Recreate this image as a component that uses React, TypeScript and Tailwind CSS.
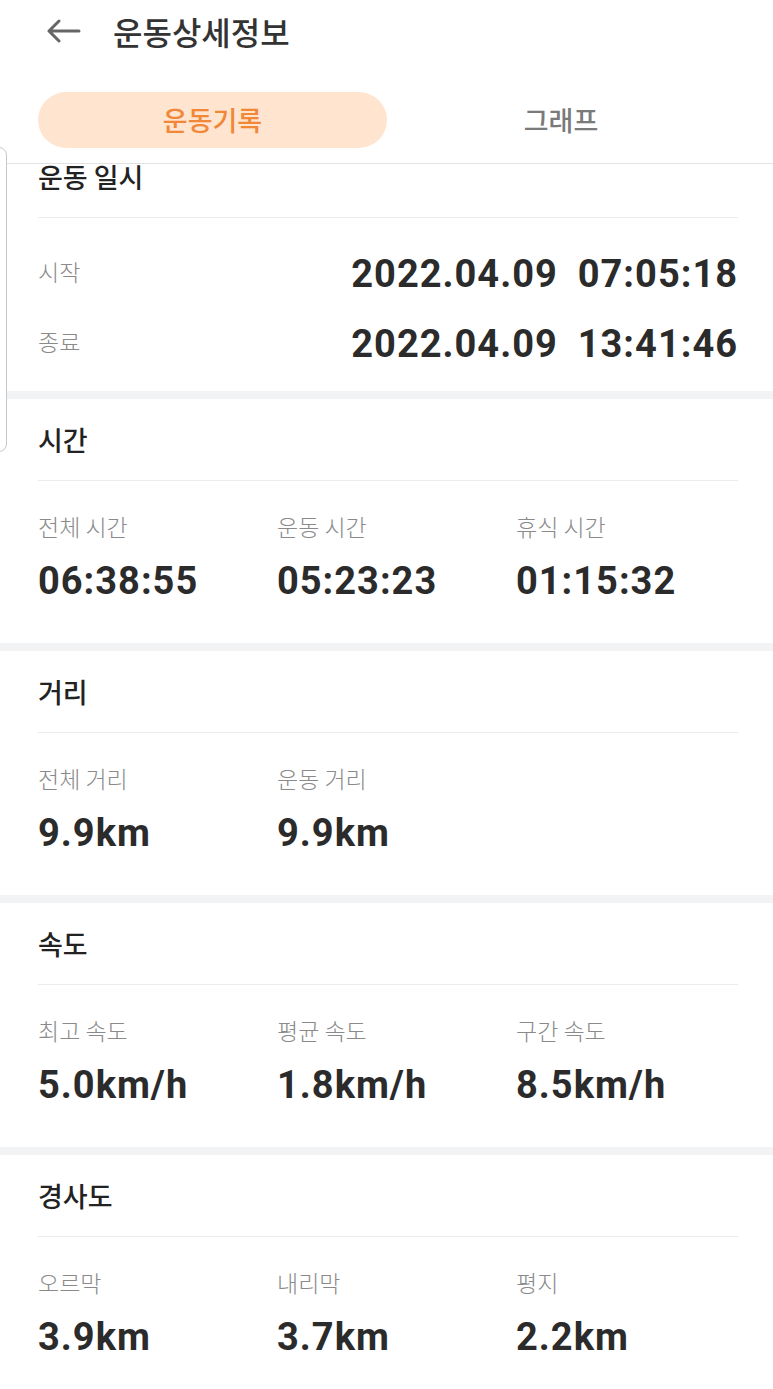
import React from "react";

const KR = { fontFamily: '"Noto Sans CJK KR", "Noto Sans", sans-serif' };
const NUM = { fontFamily: 'Roboto, "Noto Sans CJK KR", sans-serif' };

function Band() {
  return <div className="h-[8px] bg-[#f2f3f5]" />;
}

function Title({ children }: { children: React.ReactNode }) {
  return (
    <div className="h-[82px] flex items-center border-b border-[#ececec]">
      <span className="text-[27px] font-medium text-[#222] leading-none" style={KR}>
        {children}
      </span>
    </div>
  );
}

function StatSection({ title, items }: { title: string; items: [string, string][] }) {
  return (
    <div className="pl-[38px] pr-[35px] bg-white">
      <Title>{title}</Title>
      <div className="grid grid-cols-[239px_239px_1fr] pt-[30px] pb-[40px]">
        {items.map(([l, v]) => (
          <div key={l} className="flex flex-col">
            <div className="h-[30px] flex items-center text-[23px] text-[#8a8a8a] font-light" style={KR}>
              {l}
            </div>
            <div className="h-[44px] mt-[18px] flex items-center text-[38px] font-bold text-[#2b2b2b] tracking-[1px]" style={NUM}>
              {v}
            </div>
          </div>
        ))}
      </div>
    </div>
  );
}

export default function App() {
  return (
    <div className="relative w-[773px] h-[1389px] overflow-hidden bg-white">
      {/* header */}
      <div className="h-[62px] flex items-center">
        <svg className="ml-[46px]" width="35" height="24" viewBox="0 0 35 24" fill="none">
          <path d="M33 12H3M13 2L3 12l10 10" stroke="#666" strokeWidth="3" strokeLinecap="round" strokeLinejoin="round" />
        </svg>
        <span className="ml-[32px] text-[32px] font-medium text-[#333]" style={KR}>
          운동상세정보
        </span>
      </div>
      {/* tabs */}
      <div className="mt-[30px] flex px-[38px]">
        <div className="w-[349px] h-[56px] rounded-full bg-[#ffe4d0] flex items-center justify-center">
          <span className="text-[27px] font-medium text-[#f08838]" style={KR}>
            운동기록
          </span>
        </div>
        <div className="flex-1 flex items-center justify-center">
          <span className="text-[27px] font-medium text-[#7a7a7a]" style={KR}>
            그래프
          </span>
        </div>
      </div>
      <div className="mt-[15px] h-[1px] bg-[#e2e2e2]" />
      {/* scroll area */}
      <div className="overflow-hidden">
        <div className="mt-[-28px]">
          <div className="pl-[38px] pr-[35px] bg-white">
            <Title>운동 일시</Title>
            <div className="pt-[21px] pb-[12px]">
              {[
                ["시작", "2022.04.09", "07:05:18"],
                ["종료", "2022.04.09", "13:41:46"],
              ].map(([l, d, t]) => (
                <div key={l} className="h-[70px] flex items-center justify-between">
                  <span className="text-[23px] text-[#8a8a8a] font-light mt-[-6px]" style={KR}>
                    {l}
                  </span>
                  <span className="text-[38px] font-bold text-[#2b2b2b] flex gap-[20px] tracking-[1px]" style={NUM}>
                    <span>{d}</span>
                    <span>{t}</span>
                  </span>
                </div>
              ))}
            </div>
          </div>
          <Band />
          <StatSection
            title="시간"
            items={[
              ["전체 시간", "06:38:55"],
              ["운동 시간", "05:23:23"],
              ["휴식 시간", "01:15:32"],
            ]}
          />
          <Band />
          <StatSection
            title="거리"
            items={[
              ["전체 거리", "9.9km"],
              ["운동 거리", "9.9km"],
            ]}
          />
          <Band />
          <StatSection
            title="속도"
            items={[
              ["최고 속도", "5.0km/h"],
              ["평균 속도", "1.8km/h"],
              ["구간 속도", "8.5km/h"],
            ]}
          />
          <Band />
          <StatSection
            title="경사도"
            items={[
              ["오르막", "3.9km"],
              ["내리막", "3.7km"],
              ["평지", "2.2km"],
            ]}
          />
        </div>
      </div>
      {/* left edge overlay */}
      <div className="absolute left-[-20px] top-[147px] w-[27px] h-[305px] rounded-[8px] border border-[#c8c8c8] bg-white" />
    </div>
  );
}
